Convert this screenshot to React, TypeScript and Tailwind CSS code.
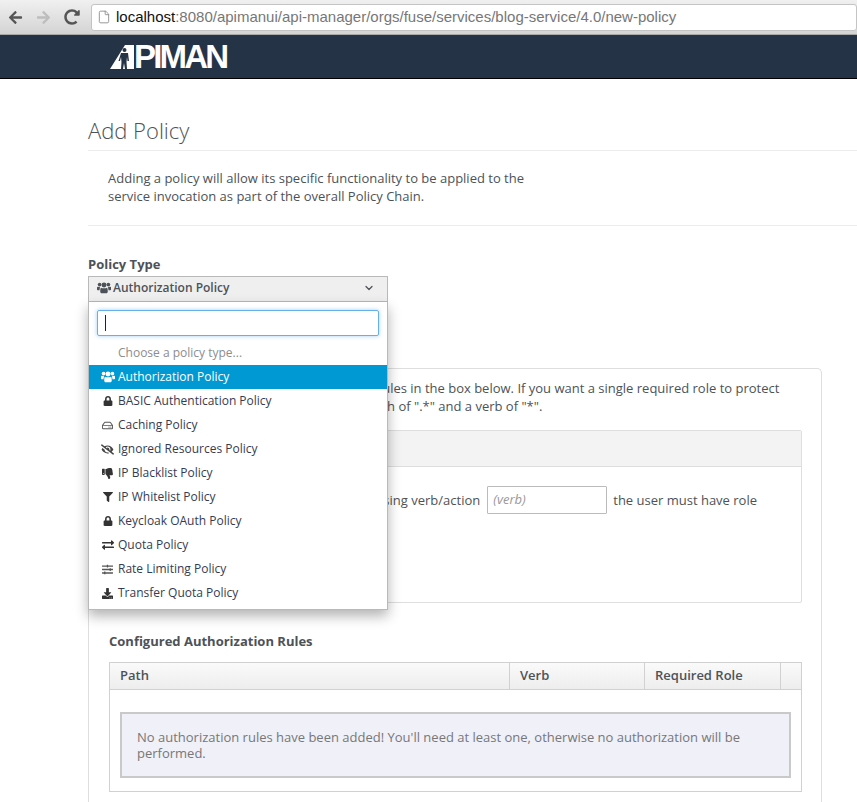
import * as React from "react"
import { File, ChevronDown } from "lucide-react"
import {
  FaArrowLeft,
  FaArrowRight,
  FaRedoAlt,
  FaLock,
  FaRegHdd,
  FaEyeSlash,
  FaThumbsDown,
  FaFilter,
  FaExchangeAlt,
  FaSlidersH,
  FaDownload,
} from "react-icons/fa"

function UsersIcon({ className }: { className?: string }) {
  return (
    <svg viewBox="0 0 16 13" fill="currentColor" className={className}>
      <circle cx="3" cy="2.6" r="2.1" />
      <circle cx="13" cy="2.6" r="2.1" />
      <circle cx="8" cy="3" r="2.8" />
      <path d="M0 5.8 C0 5.2 .5 5 1 5 L3.6 5.6 C3.3 6.6 3 7.2 2.9 9 H.8 C.3 9 0 8.7 0 8.2 Z" />
      <path d="M16 5.8 C16 5.2 15.5 5 15 5 L12.4 5.6 C12.7 6.6 13 7.2 13.1 9 H15.2 C15.7 9 16 8.7 16 8.2 Z" />
      <path d="M4.6 6.2 C5.5 7 10.5 7 11.4 6.2 C12 6.6 12.3 8 12.3 10.6 C12.3 12 11.6 12.6 10.6 12.6 H5.4 C4.4 12.6 3.7 12 3.7 10.6 C3.7 8 4 6.6 4.6 6.2 Z" />
    </svg>
  )
}

const policies = [
  { name: "Authorization Policy", icon: UsersIcon, size: "w-[14px] h-[12px] text-white", active: true },
  { name: "BASIC Authentication Policy", icon: FaLock, size: "w-[10px] h-[10px] text-[#333]" },
  { name: "Caching Policy", icon: FaRegHdd, size: "w-[11px] h-[11px] text-[#555]" },
  { name: "Ignored Resources Policy", icon: FaEyeSlash, size: "w-[13px] h-[13px] text-[#444]" },
  { name: "IP Blacklist Policy", icon: FaThumbsDown, size: "w-[11px] h-[11px] text-[#333]" },
  { name: "IP Whitelist Policy", icon: FaFilter, size: "w-[10px] h-[10px] text-[#333]" },
  { name: "Keycloak OAuth Policy", icon: FaLock, size: "w-[10px] h-[10px] text-[#333]" },
  { name: "Quota Policy", icon: FaExchangeAlt, size: "w-[12px] h-[12px] text-[#333]" },
  { name: "Rate Limiting Policy", icon: FaSlidersH, size: "w-[11px] h-[11px] text-[#555]" },
  { name: "Transfer Quota Policy", icon: FaDownload, size: "w-[11px] h-[11px] text-[#333]" },
]

function BrowserBar() {
  return (
    <div className="h-[35px] flex items-center bg-gradient-to-b from-[#f0f0f0] to-[#d4d4d4] border-b border-[#a9a9a9]">
      <FaArrowLeft className="ml-[8px] text-[15px] text-[#555]" />
      <FaArrowRight className="ml-[13px] text-[15px] text-[#bdbdbd]" />
      <FaRedoAlt className="ml-[13px] text-[16px] text-[#555]" />
      <div className="ml-[11px] h-[27px] flex-1 flex items-center bg-white border border-[#c4c4c4] rounded-[3px] font-['Liberation_Sans',sans-serif] text-[15px]">
        <File className="ml-[5px] w-[14px] h-[16px] text-[#8a8a8a]" strokeWidth={1.5} />
        <span className="ml-[5px] text-[#111]">localhost</span>
        <span className="text-[#777]">:8080/apimanui/api-manager/orgs/fuse/services/blog-service/4.0/new-policy</span>
      </div>
    </div>
  )
}

function Logo() {
  return (
    <div className="ml-[110px] flex items-center h-[28px] font-['Liberation_Sans',sans-serif] font-bold text-white text-[33px] tracking-[-2.8px] leading-none">
      <svg width="24" height="24" viewBox="0 0 24 24">
        <path d="M0 24 L15 0 H24 V24 Z" fill="#fff" />
        <circle cx="14.5" cy="5" r="2" fill="#253347" />
        <path d="M11 8 h7 l1 8 h-1.5 l-.5-4 -.5 5 .5 7 h-2 l-1-6 -1 6 h-2 l.5-7 -.5-5 -1 4 h-1.5 z" fill="#253347" />
      </svg>
      PIMAN
    </div>
  )
}

function PolicyDropdown() {
  return (
    <div className="absolute left-0 top-[26px] w-[300px] bg-white border border-[#b9b9b9] border-t-0 shadow-[0_6px_12px_rgba(0,0,0,0.3)] z-10 pb-[4px]">
      <div className="px-[8px] pt-[8px] pb-[5px]">
        <div className="h-[26px] border border-[#66afe9] rounded-[2px] shadow-[0_0_4px_rgba(102,175,233,0.6)] flex items-center pl-[7px]">
          <div className="w-px h-[16px] bg-[#222]" />
        </div>
      </div>
      <div className="h-[24px] pl-[29px] flex items-center text-[#8b8d8f]">Choose a policy type...</div>
      {policies.map((p) => (
        <div
          key={p.name}
          className={
            p.active
              ? "h-[24px] flex items-center bg-[#0099d3] text-white"
              : "h-[24px] flex items-center text-[#363b52]"
          }
        >
          <span className="w-[29px] flex justify-center pl-[8px]">
            <p.icon className={p.size} />
          </span>
          {p.name}
        </div>
      ))}
    </div>
  )
}

function RulePanel() {
  return (
    <div className="mt-[66px] w-[734px] border border-[#dedede] rounded-[5px] border-b-0 px-[20px] pt-[10px] pb-[40px] text-[13px]">
      <p className="w-[693px] leading-[18px] text-[#4d5258]">
        Set up authorization by adding one or more rules in the box below. If you want a single required role to protect the entire service, simply add a rule with a path of ".*" and a verb of "*".
      </p>
      <div className="mt-[15px] w-[693px] h-[173px] border border-[#dedede] rounded-[2px]">
        <div className="h-[36px] bg-[#f3f3f3] border-b border-[#dedede]" />
        <div className="mt-[19px] flex items-center px-[10px] text-[#4d5258]">
          <span className="ml-[104px] pt-[2px]">When the path matches, using verb/action</span>
          <div className="ml-[7px] w-[120px] h-[28px] border border-[#bbb] rounded-[1px] flex items-center pl-[5px] italic text-[13px] text-[#999]">
            (verb)
          </div>
          <span className="ml-[6px] pt-[2px]">the user must have role</span>
        </div>
      </div>
      <h3 className="mt-[29px] font-bold text-[#4d5258]">Configured Authorization Rules</h3>
      <div className="mt-[10px] w-[693px] border border-[#d1d1d1]">
        <div className="h-[27px] flex font-semibold text-[#4d5258] bg-gradient-to-b from-[#fafafa] to-[#ededed] border-b border-[#d1d1d1]">
          <div className="w-[400px] pl-[10px] flex items-center border-r border-[#d1d1d1]">Path</div>
          <div className="w-[135px] pl-[10px] flex items-center border-r border-[#d1d1d1]">Verb</div>
          <div className="w-[136px] pl-[10px] flex items-center border-r border-[#d1d1d1]">Required Role</div>
          <div className="flex-1" />
        </div>
        <div className="px-[10px] pt-[22px] pb-[13px]">
          <div className="h-[66px] bg-[#f0f0f9] border-2 border-[#c9c9c9] px-[15px] pt-[15px] leading-[16px] text-[#777]">
            No authorization rules have been added! You'll need at least one, otherwise no authorization will be performed.
          </div>
        </div>
      </div>
    </div>
  )
}

export default function App() {
  return (
    <div className="w-[857px] h-[802px] overflow-hidden bg-white font-['Open_Sans',sans-serif] text-[12px]">
      <BrowserBar />
      <div className="h-[44px] bg-[#253347] border-b border-black flex items-center">
        <Logo />
      </div>
      <div className="pl-[88px]">
        <h1 className="mt-[35px] text-[22px] font-light leading-[32px] text-[#4d5258]">Add Policy</h1>
        <div className="mt-[4px] border-t border-[#ececec]" />
        <p className="mt-[18px] pl-[20px] w-[460px] text-[13px] leading-[18px] text-[#4d5258]">
          Adding a policy will allow its specific functionality to be applied to the service invocation as part of the overall Policy Chain.
        </p>
        <div className="mt-[20px] border-t border-[#ececec]" />
        <div className="mt-[29px] font-bold text-[13px] leading-[18px] text-[#4d5258]">Policy Type</div>
        <div className="relative mt-[3px] w-[300px]">
          <div className="h-[26px] flex items-center border border-[#b9b9b9] bg-[#efefef] pl-[8px] pb-[2px] font-semibold text-[#4d5258]">
            <UsersIcon className="w-[14px] h-[12px] mr-[2px]" />
            Authorization Policy
            <ChevronDown className="ml-auto mr-[12px] w-[12px] h-[12px]" strokeWidth={2.5} />
          </div>
          <PolicyDropdown />
        </div>
        <RulePanel />
      </div>
    </div>
  )
}
